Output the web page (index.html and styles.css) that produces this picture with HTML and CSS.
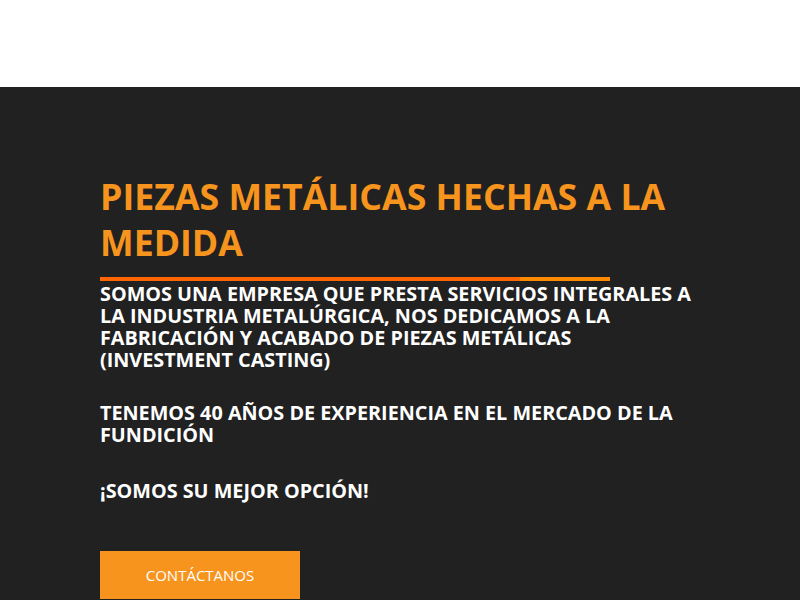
FILE: index.html
```html
<!DOCTYPE html>
<html lang="es">
<head>
<meta charset="utf-8">
<link rel="stylesheet" href="styles.css">
</head>
<body>
<header class="topbar"></header>
<section class="hero">
  <div class="hero-inner">
    <h1 class="title">PIEZAS METÁLICAS HECHAS A LA MEDIDA</h1>
    <div class="rule"><span class="rule-a"></span><span class="rule-b"></span></div>
    <div class="texts">
      <p class="text">SOMOS UNA EMPRESA QUE PRESTA SERVICIOS INTEGRALES A LA INDUSTRIA METALÚRGICA, NOS DEDICAMOS A LA FABRICACIÓN Y ACABADO DE PIEZAS METÁLICAS (INVESTMENT CASTING)</p>
      <p class="text">TENEMOS 40 AÑOS DE EXPERIENCIA EN EL MERCADO DE LA FUNDICIÓN</p>
      <p class="text text-last">¡SOMOS SU MEJOR OPCIÓN!</p>
    </div>
    <a class="btn" href="#">CONTÁCTANOS</a>
  </div>
</section>
</body>
</html>
```

FILE: styles.css
```css
html, body {
  margin: 0;
  padding: 0;
}
body {
  font-family: "Open Sans", "Noto Sans", sans-serif;
  background: #212121;
  overflow: hidden;
}
.topbar {
  height: 87px;
  background: #ffffff;
}
.hero {
  background: #212121;
  min-height: 513px;
}
.hero-inner {
  padding: 86px 100px 0 100px;
  width: 600px;
}
.title {
  margin: 0;
  color: #f7941d;
  font-size: 35.7px;
  line-height: 46px;
  font-weight: 700;
}
.rule {
  display: flex;
  width: 510px;
  height: 4px;
  margin-top: 12px;
}
.rule-a {
  width: 420px;
  background: #ff6600;
}
.rule-b {
  flex: 1;
  background: #ff8a00;
}
.texts {
  display: flex;
  flex-direction: column;
  gap: 31px;
  margin-top: 2px;
}
.text {
  margin: 0;
  color: #ffffff;
  font-size: 19.8px;
  line-height: 22px;
  font-weight: 700;
}
.text-last {
  margin-top: 3px;
}
.btn {
  display: flex;
  align-items: center;
  justify-content: center;
  margin-top: 49px;
  width: 200px;
  height: 48px;
  background: #f7941d;
  color: #ffffff;
  text-decoration: none;
  font-size: 15px;
}
```
